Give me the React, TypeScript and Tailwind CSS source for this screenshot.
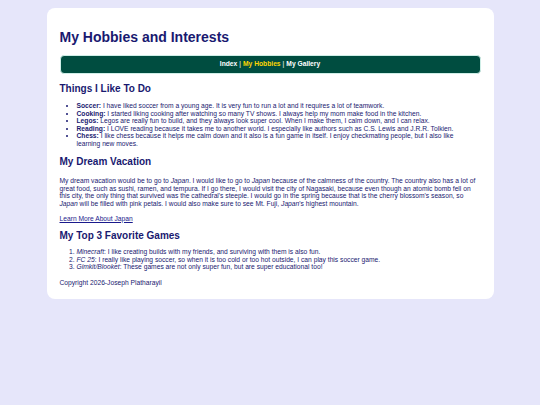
const hobbies = [
  { name: "Soccer:", text: "I have liked soccer from a young age. It is very fun to run a lot and it requires a lot of teamwork." },
  { name: "Cooking:", text: "I started liking cooking after watching so many TV shows. I always help my mom make food in the kitchen." },
  { name: "Legos:", text: "Legos are really fun to build, and they always look super cool. When I make them, I calm down, and I can relax." },
  { name: "Reading:", text: "I LOVE reading because it takes me to another world. I especially like authors such as C.S. Lewis and J.R.R. Tolkien." },
  { name: "Chess:", text: "I like chess because it helps me calm down and it also is a fun game in itself. I enjoy checkmating people, but I also like learning new moves." },
];

const games = [
  { name: "Minecraft", text: ": I like creating builds with my friends, and surviving with them is also fun." },
  { name: "FC 25", text: ": I really like playing soccer, so when it is too cold or too hot outside, I can play this soccer game." },
  { name: "Gimkit/Blooket", text: ": These games are not only super fun, but are super educational too!" },
];

export default function App() {
  return (
    <div className="min-h-screen bg-[#e6e6fa] pt-2 pb-10 font-['Liberation_Sans',Arial,sans-serif] text-[#191970]">
      <div className="mx-auto w-[447px] rounded-lg bg-white px-[13px] pt-[21px] pb-[12.5px]">

        {/* TITLE */}
        <h1 className="text-[14px] font-bold leading-4">My Hobbies and Interests</h1>

        {/* NAV */}
        <nav className="mt-[10px] flex h-[19px] items-center justify-center rounded-[4px] border border-[#cfeee7] bg-[#004d40] text-[6.7px] text-white">
          <span className="font-bold">Index</span>
          <span className="px-[2px]">|</span>
          <span className="font-bold text-[#ffd700]">My Hobbies</span>
          <span className="px-[2px]">|</span>
          <span className="font-bold">My Gallery</span>
        </nav>

        {/* HOBBIES */}
        <h2 className="mt-[9px] text-[10px] font-bold leading-3">Things I Like To Do</h2>
        <ul className="mt-[7px] list-disc pl-[17px] pr-[8px] text-[6.7px] leading-[7.5px]">
          {hobbies.map((h) => (
            <li key={h.name}>
              <strong>{h.name}</strong> {h.text}
            </li>
          ))}
        </ul>

        {/* VACATION */}
        <h2 className="mt-[9px] text-[10px] font-bold leading-3">My Dream Vacation</h2>
        <p className="mt-[9px] text-[6.7px] leading-[7.5px]">
          My dream vacation would be to go to <em>Japan</em>. I would like to go to <em>Japan</em> because of the calmness of the country. The country also has a lot of great food, such as sushi, ramen, and tempura. If I go there, I would visit the city of Nagasaki, because even though an atomic bomb fell on this city, the only thing that survived was the cathedral's steeple. I would go in the spring because that is the cherry blossom's season, so <em>Japan</em> will be filled with pink petals. I would also make sure to see Mt. Fuji, <em>Japan</em>'s highest mountain.
        </p>
        <p className="mt-[7.5px] text-[6.7px] leading-[7.5px]">
          <a href="#" className="text-[#1a1a8c] underline">Learn More About Japan</a>
        </p>

        {/* GAMES */}
        <h2 className="mt-[8px] text-[10px] font-bold leading-3">My Top 3 Favorite Games</h2>
        <ol className="mt-[6px] list-decimal pl-[17px] text-[6.7px] leading-[7.5px]">
          {games.map((g) => (
            <li key={g.name}>
              <em>{g.name}</em>{g.text}
            </li>
          ))}
        </ol>

        <p className="mt-[8.5px] text-[6.7px] leading-[7.5px]">Copyright 2026-Joseph Platharayil</p>
      </div>
    </div>
  );
}
